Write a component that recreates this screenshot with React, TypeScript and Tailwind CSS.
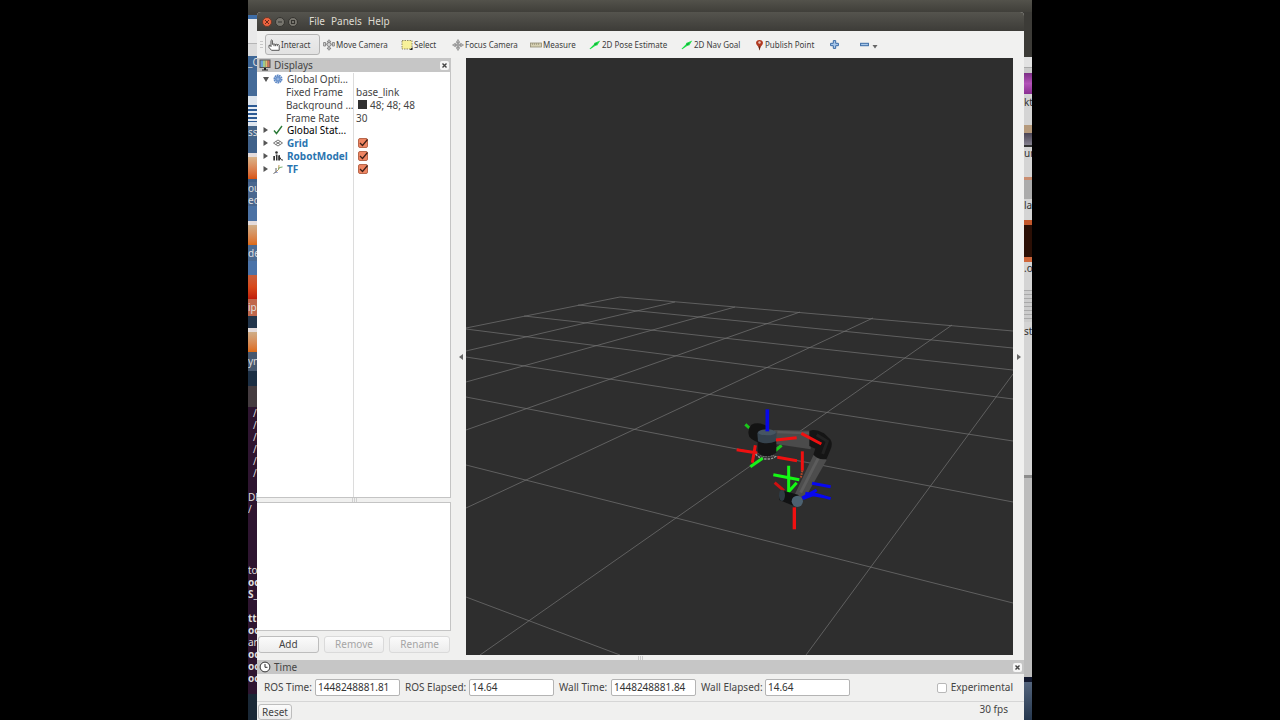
import type { ReactNode } from "react";

type Slice = { cls: string; text?: string };

// Slivers of the desktop that stay visible on both sides of the window
const leftDesktop: Slice[] = [
  { cls: "h-[3px] bg-[#3f3e3a]" },
  { cls: "h-[4px] bg-[#3f6ea8]" },
  { cls: "h-[25px] bg-[#e9e9e9] border-b border-[#b5b5b5]" },
  { cls: "h-[12px] bg-[#dcdcdc]" },
  { cls: "h-[14px] bg-[#3f6796]", text: "_C" },
  { cls: "h-[26px] bg-[#456b99]" },
  { cls: "h-[9px] bg-[#dfe6ee]" },
  { cls: "h-[17px] pl-[3px] bg-[repeating-linear-gradient(#2c5a94_0_2px,#e9eef4_2px_4px)]" },
  { cls: "h-[4px] bg-[#dfe6ee]" },
  { cls: "h-[14px] bg-[#446489]", text: "ss" },
  { cls: "h-[13px] bg-[#40618a]" },
  { cls: "h-[4px] bg-[#e4dcdc]" },
  { cls: "h-[22px] bg-linear-to-b from-[#d9b48a] to-[#d8540f]" },
  { cls: "h-[3px] bg-[#3f5f88]" },
  { cls: "h-[12px] bg-[#4a678f]", text: "ou" },
  { cls: "h-[12px] bg-[#4a678f]", text: "eo" },
  { cls: "h-[15px] bg-[#4c72a4]" },
  { cls: "h-[4px] bg-[#e4dcdc]" },
  { cls: "h-[20px] bg-linear-to-b from-[#cfae88] to-[#dd6a12]" },
  { cls: "h-[2px] bg-[#4c6b93]" },
  { cls: "h-[14px] bg-[#4c6b93]", text: "de" },
  { cls: "h-[14px] bg-[#4b73a8]" },
  { cls: "h-[24px] bg-linear-to-b from-[#c75f3a] via-[#d8481a] to-[#c01c0c]" },
  { cls: "h-[2px] bg-[#c0674c]" },
  { cls: "h-[15px] bg-[#c0674c]", text: "ip" },
  { cls: "h-[12px] bg-[#22354b]" },
  { cls: "h-[4px] bg-[#e4dcdc]" },
  { cls: "h-[20px] bg-linear-to-b from-[#cfae88] to-[#dd6a12]" },
  { cls: "h-[3px] bg-[#46586f]" },
  { cls: "h-[16px] bg-[#46586f]", text: "yn" },
  { cls: "h-[15px] bg-[#1c2f44]" },
  { cls: "h-[21px] bg-[#453c40]" },
  { cls: "h-[12px] pl-[5px]", text: "/" },
  { cls: "h-[12px] pl-[5px]", text: "/" },
  { cls: "h-[12px] pl-[5px]", text: "/" },
  { cls: "h-[12px] pl-[5px]", text: "/" },
  { cls: "h-[12px] pl-[5px]", text: "/" },
  { cls: "h-[12px] pl-[5px]", text: "/" },
  { cls: "h-[12px]" },
  { cls: "h-[12px]", text: "DE" },
  { cls: "h-[12px]", text: "/" },
  { cls: "h-[49px]" },
  { cls: "h-[12px]", text: "to" },
  { cls: "h-[12px] font-bold", text: "oc" },
  { cls: "h-[12px] font-bold", text: "S_" },
  { cls: "h-[12px]" },
  { cls: "h-[12px] font-bold", text: "tt" },
  { cls: "h-[12px] font-bold", text: "oc" },
  { cls: "h-[12px]", text: "ar" },
  { cls: "h-[12px] font-bold", text: "oc" },
  { cls: "h-[12px] font-bold", text: "oc" },
  { cls: "h-[12px] font-bold", text: "oc" },
  { cls: "h-[10px]" },
  { cls: "grow bg-[#1a2836]" },
];

const rightDesktop: Slice[] = [
  { cls: "h-[45px] bg-[#3c3b37]" },
  { cls: "h-[11px] bg-[#e2e2e2] border-b border-[#a9a9a9]" },
  { cls: "h-[5px] bg-[#c9c9c9]" },
  { cls: "h-[21px] bg-linear-to-b from-[#7d2f86] via-[#b352b8] to-[#8a2f92]" },
  { cls: "h-[2px]" },
  { cls: "h-[16px] text-[#333]", text: "kt" },
  { cls: "h-[13px]" },
  { cls: "h-[8px] bg-[#b59a7c]" },
  { cls: "h-[12px] bg-linear-to-b from-[#4a4555] to-[#85818f]" },
  { cls: "h-[2px] bg-[#333]" },
  { cls: "h-[14px] text-[#333]", text: "ur" },
  { cls: "h-[16px]" },
  { cls: "h-[3px] bg-[#c98d70]" },
  { cls: "h-[19px] bg-[#ababab]" },
  { cls: "h-[16px] text-[#333]", text: "la" },
  { cls: "h-[5px]" },
  { cls: "h-[5px] bg-[#c4582c]" },
  { cls: "h-[32px] bg-[#2b0f05]" },
  { cls: "h-[5px] bg-[#d0683c]" },
  { cls: "h-[14px] text-[#333]", text: ".o" },
  { cls: "h-[14px]" },
  { cls: "h-[32px] bg-[repeating-linear-gradient(#a9a9a9_0_1px,#cccccc_1px_4px)]" },
  { cls: "h-[3px]" },
  { cls: "h-[17px] text-[#333]", text: "st" },
  { cls: "h-[133px]" },
  { cls: "h-[3px] bg-[#8d8d8d]" },
  { cls: "h-[199px] bg-[#bcbcbc]" },
  { cls: "h-[5px] bg-[#12182e]" },
  { cls: "grow bg-linear-to-b from-[#54657d] to-[#26384f]" },
];

const gridLines = [
  [620, 297, 1013, 331],
  [578, 305, 1013, 348],
  [524, 316, 1013, 370],
  [466, 329, 1013, 399],
  [466, 357, 1013, 441],
  [466, 397, 1013, 502],
  [466, 465, 1013, 603],
  [466, 597, 620, 655],
  [620, 297, 466, 328],
  [675, 302, 466, 351],
  [735, 307, 466, 382],
  [800, 312, 466, 430],
  [873, 318, 466, 508],
  [952, 325, 480, 655],
  [1013, 374, 806, 655],
];

function Strip({ slices, className }: { slices: Slice[]; className: string }) {
  return (
    <div aria-hidden="true" className={"flex shrink-0 flex-col overflow-hidden text-[10px] leading-[12px] " + className}>
      {slices.map((s, i) => (
        <div key={i} className={"shrink-0 overflow-hidden whitespace-nowrap " + s.cls}>
          {s.text}
        </div>
      ))}
    </div>
  );
}

function HandIcon() {
  return (
    <svg viewBox="0 0 12 12" className="h-3 w-3 shrink-0" fill="#fff" stroke="#444" strokeWidth="0.9" strokeLinejoin="round">
      <path d="M3 7.600V1.500Q3.700.4 4.400 1.500V5.400Q5.200 4.500 6 5.400 6.800 4.700 7.600 5.500 8.500 4.900 9.300 5.700 10.600 5 11.200 6.300V11.300H3.500L1 8.500V6.300Q1.800 5.500 3 7.600Z" />
      <path d="M6 5.400V7.200M7.600 5.500V7.200M9.300 5.700V7.200" fill="none" />
    </svg>
  );
}

function MoveIcon() {
  return (
    <svg viewBox="0 0 12 12" className="h-3 w-3 shrink-0" fill="#d5d5d5" stroke="#777" strokeWidth="0.8">
      <path d="M6 .7 8 3H4ZM6 11.300 4 9H8ZM.6 3.500H2.600V7H.6ZM9.400 3.500H11.400V7H9.400Z" />
      <path d="M2.600 5.200H9.400M6 3V9" />
      <circle cx="6" cy="5.500" r="2" />
    </svg>
  );
}

function SelectIcon() {
  return (
    <svg viewBox="0 0 12 12" className="h-3 w-3 shrink-0">
      <rect x="1" y="1.500" width="10" height="8.500" fill="#f8f19a" stroke="#77704a" strokeDasharray="1.500 1" strokeWidth="0.800" />
      <path d="M11.500 8V11H8.500Z" fill="#222" />
    </svg>
  );
}

function FocusIcon() {
  return (
    <svg viewBox="0 0 12 12" className="h-3 w-3 shrink-0" fill="#bbb" stroke="#888" strokeWidth="0.700">
      <circle cx="6" cy="6" r="2.800" fill="none" />
      <path d="M6 .5 7.500 3 6.500 3.300V5.500H8.700L9 4.500 11.500 6 9 7.500 8.700 6.500H6.500V8.700L7.500 9 6 11.500 4.500 9 5.500 8.700V6.500H3.300L3 7.500.5 6 3 4.500 3.300 5.500H5.500V3.300L4.500 3Z" />
    </svg>
  );
}

function RulerIcon() {
  return (
    <svg viewBox="0 0 12 12" className="h-3 w-3 shrink-0">
      <rect x="0.500" y="4" width="11" height="4" fill="#d6d0b2" stroke="#928c74" strokeWidth="0.800" />
      <path d="M2.500 4V6M4.500 4V6M6.500 4V6M8.500 4V6" stroke="#928c74" strokeWidth="0.600" />
    </svg>
  );
}

function ArrowIcon() {
  return (
    <svg viewBox="0 0 12 12" className="h-3 w-3 shrink-0">
      <path d="M.5 9.800 5 5.200 5.200 3.900 11.300 1.400 8.200 6.500 6.800 6.500 1.300 10.300Z" fill="#1fe04a" />
      <path d="M5 5.200 8.500 3.500 6.800 6.500Z" fill="#12a13a" />
    </svg>
  );
}

function PinIcon() {
  return (
    <svg viewBox="0 0 9 12" className="h-3 w-[9px] shrink-0">
      <path d="M4.500 11.500 3.500 8Q1 5.500 1 3.900 1.200.9 4.500.9 7.800.9 8 3.900 8 5.500 5.500 8Z" fill="#b23a22" />
      <path d="M3.500 7.500H5.500L4.500 11.500Z" fill="#5c2413" />
      <circle cx="4.500" cy="3.500" r="1.200" fill="#e8c4b8" />
    </svg>
  );
}

function MonitorIcon() {
  return (
    <svg viewBox="0 0 12 12" className="h-3 w-3">
      <rect x="0.500" y="0.500" width="11" height="8.500" fill="#555" />
      <path d="M1.500 1.500H4V8H1.500Z" fill="#6b9fd6" />
      <path d="M4 1.500H6.500V8H4Z" fill="#9cc98c" />
      <path d="M6.500 1.500H8.500V8H6.500Z" fill="#e0bd6c" />
      <path d="M8.500 1.500H10.500V8H8.500Z" fill="#d0705f" />
      <path d="M5 9H7V10.500H9V11.500H3V10.500H5Z" fill="#222" />
    </svg>
  );
}

function ClockIcon() {
  return (
    <svg viewBox="0 0 12 12" className="h-3 w-3" fill="none" stroke="#333">
      <circle cx="6" cy="6" r="4.900" fill="#fff" />
      <path d="M6 3V6.300H8.500" />
    </svg>
  );
}

const rowIcons: Record<string, ReactNode> = {
  gear: (
    <g fill="none" stroke="#5b86c4">
      <circle cx="5" cy="5" r="3.600" strokeWidth="1.800" strokeDasharray="1.700 0.500" />
      <circle cx="5" cy="5" r="2.400" fill="#7ba2d8" />
      <circle cx="5" cy="5" r="0.600" fill="#dfe9f6" stroke="none" />
    </g>
  ),
  check: <path d="M1 5.500 3.500 8.500 9 1" fill="none" stroke="#2c7a38" strokeWidth="1.400" />,
  grid: <path d="M5 2 9.500 5 5 8 .5 5ZM2.800 3.500 7.200 6.500M7.200 3.500 2.800 6.500" fill="none" stroke="#555" strokeWidth="0.800" />,
  robot: (
    <g fill="#333">
      <circle cx="3.500" cy="1.500" r="1.300" />
      <path d="M.3 5H2V9.500H.3ZM2.700 3.500H4.500V9.500H3V6ZM5.200 4.500 7 4V9.500H5.200Z" />
      <path d="M6.500 6 8.500 9H10" fill="none" stroke="#333" />
    </g>
  ),
  axes: (
    <g fill="none" strokeWidth="0.900">
      <path d="M3 4V8L.5 9.500" stroke="#555" />
      <path d="M3 8 5.500 5.500 6 1" stroke="#b8924a" />
      <path d="M5.500 5.500 6.500 3.500 9.500 3" stroke="#5da05a" />
      <path d="M3 8 4.500 8.500" stroke="#4a5dc0" />
    </g>
  ),
};

type Row = { name: string; icon?: string; arrow?: "open" | "closed"; value?: ReactNode; tone?: string; checked?: boolean };

const rows: Row[] = [
  { name: "Global Opti...", icon: "gear", arrow: "open" },
  { name: "Fixed Frame", value: "base_link" },
  {
    name: "Background ...",
    value: (
      <span className="flex items-center gap-[3px]">
        <span className="ml-[2px] h-[9px] w-[9px] bg-[#303030]" />
        48; 48; 48
      </span>
    ),
  },
  { name: "Frame Rate", value: "30" },
  { name: "Global Stat...", icon: "check", arrow: "closed", tone: "text-black" },
  { name: "Grid", icon: "grid", arrow: "closed", tone: "font-bold text-[#2a74b0]", checked: true },
  { name: "RobotModel", icon: "robot", arrow: "closed", tone: "font-bold text-[#2a74b0]", checked: true },
  { name: "TF", icon: "axes", arrow: "closed", tone: "font-bold text-[#2a74b0]", checked: true },
];

function DisplayTree() {
  return (
    <table className="mt-px h-[102px] w-full table-fixed border-separate border-spacing-0 leading-[12px]">
      <tbody>
        {rows.map((row) => (
          <tr key={row.name}>
            <td className="w-[97px] overflow-hidden border-r border-[#dcdcdc] p-0">
              <div className="flex items-center whitespace-nowrap">
                {row.icon ? (
                  <>
                    <svg viewBox="0 0 6 6" className="ml-[6px] h-[6px] w-[6px] shrink-0" fill="#555">
                      <path d={row.arrow === "open" ? "M0 1H6L3 6Z" : "M.5 0 5 3 .5 6Z"} />
                    </svg>
                    <svg viewBox="0 0 10 10" className="mx-[4px] h-[10px] w-[10px] shrink-0">
                      {rowIcons[row.icon]}
                    </svg>
                  </>
                ) : (
                  <span className="w-[29px] shrink-0" />
                )}
                <span className={row.tone}>{row.name}</span>
              </div>
            </td>
            <td className="py-0 pr-0 pl-[2px]">
              {row.checked ? (
                <span className="ml-[2px] grid h-[10px] w-[10px]">
                  <input
                    type="checkbox"
                    defaultChecked
                    aria-label={row.name}
                    className="col-start-1 row-start-1 h-[10px] w-[10px] appearance-none rounded-[2px] border border-[#b9684c] bg-[#ee8562]"
                  />
                  <svg viewBox="0 0 10 10" className="pointer-events-none col-start-1 row-start-1 h-[10px] w-[10px]">
                    <path d="M2 5 4.500 7.500 9.500 1.500" fill="none" stroke="#3c2018" strokeWidth="1.200" />
                  </svg>
                </span>
              ) : (
                row.value
              )}
            </td>
          </tr>
        ))}
      </tbody>
    </table>
  );
}

function PanelHeader({ title, icon, className }: { title: string; icon: ReactNode; className: string }) {
  return (
    <div className={"flex h-[14px] shrink-0 items-center gap-[3px] bg-[#c6c6c6] pl-[2px] " + className}>
      {icon}
      <h2 className="grow leading-[14px]">{title}</h2>
      <button aria-label={"Close " + title} className="grid h-[9px] w-[9px] place-items-center rounded-[2px] bg-[#f6f6f6]">
        <svg viewBox="0 0 5 5" className="h-[5px] w-[5px]" stroke="#444" strokeWidth="1.400">
          <path d="M.5.5 4.500 4.500M4.500.5.5 4.500" />
        </svg>
      </button>
    </div>
  );
}

function ToolButton({ label, icon, className }: { label: string; icon: ReactNode; className: string }) {
  return (
    <button className={"flex h-[21px] shrink-0 items-center gap-px whitespace-nowrap " + className}>
      {icon}
      {label}
    </button>
  );
}

function Toolbar() {
  return (
    <div className="flex h-[27px] shrink-0 items-center bg-[#f1f1f0] pl-[3px] text-[8px] text-[#3c3c3c]">
      <span className="mr-[2px] h-[8px] w-[3px] bg-[repeating-linear-gradient(#c8c8c8_0_1px,#f1f1f0_1px_3px)]" />
      <ToolButton
        label="Interact"
        icon={<HandIcon />}
        className="mr-[3px] w-[55px] rounded-[3px] border border-[#b4b4b4] bg-linear-to-b from-[#ececec] to-[#e2e2e2] pl-[2px]"
      />
      <ToolButton label="Move Camera" icon={<MoveIcon />} className="w-[78px]" />
      <ToolButton label="Select" icon={<SelectIcon />} className="w-[51px]" />
      <ToolButton label="Focus Camera" icon={<FocusIcon />} className="w-[78px]" />
      <ToolButton label="Measure" icon={<RulerIcon />} className="w-[59px]" />
      <ToolButton label="2D Pose Estimate" icon={<ArrowIcon />} className="w-[92px]" />
      <ToolButton label="2D Nav Goal" icon={<ArrowIcon />} className="w-[74px]" />
      <ToolButton label="Publish Point" icon={<PinIcon />} className="w-[75px] gap-[3px]" />
      <button aria-label="Add tool" className="w-[30px] shrink-0">
        <svg viewBox="0 0 9 9" className="h-[9px] w-[9px]">
          <path d="M3.300.6H5.700V3.300H8.400V5.700H5.700V8.400H3.300V5.700H.6V3.300H3.300Z" fill="#a9c8ea" stroke="#3a6ba5" />
        </svg>
      </button>
      <button aria-label="Remove tool" className="flex shrink-0 items-center gap-[3px]">
        <svg viewBox="0 0 9 9" className="h-[9px] w-[9px]">
          <rect x="0.600" y="3.300" width="7.800" height="2.400" fill="#a9c8ea" stroke="#3a6ba5" />
        </svg>
        <svg viewBox="0 0 6 9" className="h-[9px] w-[6px]" fill="#666">
          <path d="M.5 5H5.500L3 8.500Z" />
        </svg>
      </button>
    </div>
  );
}

function RobotArm() {
  return (
    <g transform="translate(700 380) scale(0.3333)" fill="none">
      <path d="M136 133 148 144M245 196 226 212" stroke="#19c819" strokeWidth="9" />
      <path d="M110 209 172 219M166 196 157 248" stroke="#ee1010" strokeWidth="9" />
      <path d="M154 134Q174 124 200 138L190 190Q160 186 148 170Q140 150 154 134Z" fill="#131313" />
      <path d="M222 150 336 152 332 208 226 192Z" fill="#4b4b4b" />
      <path d="M232 156 328 160" stroke="#595959" strokeWidth="7" />
      <path d="M173 178V218Q200 240 229 218V178Z" fill="#141415" />
      <path d="M172 158Q200 142 230 158L228 184Q200 196 174 184Z" fill="#35424d" />
      <ellipse cx="201" cy="157" rx="27" ry="9" fill="#465562" />
      <path d="M167 222Q180 238 202 237 222 237 230 226" stroke="#999" strokeWidth="4" strokeDasharray="7 3" />
      <path d="M180 227Q200 234 222 226" stroke="#777" strokeWidth="3" strokeDasharray="5 3" />
      <path d="M151 260 188 235" stroke="#19f019" strokeWidth="9" />
      <path d="M342 222 380 240 314 356 284 344Z" fill="#4d4d4d" />
      <path d="M356 232 302 338" stroke="#5c5c5c" strokeWidth="9" />
      <path d="M328 152Q346 145 372 160L391 178Q400 193 391 210L380 236Q358 242 340 224L346 206 328 198Z" fill="#151515" />
      <path d="M350 164 382 184 368 222" stroke="#222" strokeWidth="9" />
      <path d="M228 180 290 173M304 160 364 192M232 232 291 242" stroke="#f01010" strokeWidth="9" />
      <path d="M307 214V272" stroke="#f01010" strokeWidth="9" />
      <path d="M307 272 302 296" stroke="#b84828" strokeWidth="6" strokeDasharray="5 3" />
      <path d="M202 88V154" stroke="#0808e8" strokeWidth="11" />
      <path d="M266 257V334M220 284 298 299M263 338 290 308" stroke="#14f814" strokeWidth="9" />
      <path d="M224 308 252 332" stroke="#d01010" strokeWidth="9" />
      <path d="M243 330 294 344 306 366 282 378 238 360Z" fill="#111213" />
      <ellipse cx="246" cy="346" rx="9" ry="17" fill="#2f3b44" />
      <path d="M336 310 392 320M306 354 350 330M308 356 344 342 392 356M316 340 372 350" stroke="#0808f0" strokeWidth="9" />
      <circle cx="292" cy="364" r="17" fill="#4c6170" />
      <path d="M283 382V448" stroke="#f01010" strokeWidth="10" />
    </g>
  );
}

function Viewport() {
  return (
    <svg
      role="img"
      aria-label="Robot arm on a ground grid"
      viewBox="466 58 547 597"
      preserveAspectRatio="xMidYMax slice"
      className="min-w-0 flex-1 bg-[#2e2e2e]"
    >
      <g stroke="#757575" strokeWidth="0.700">
        {gridLines.map(([x1, y1, x2, y2], i) => (
          <line key={i} x1={x1} y1={y1} x2={x2} y2={y2} />
        ))}
      </g>
      <RobotArm />
    </svg>
  );
}

function TimeField({ id, label, value, className }: { id: string; label: string; value: string; className: string }) {
  return (
    <>
      <label htmlFor={id} className={"shrink-0 whitespace-nowrap " + className}>
        {label}
      </label>
      <input
        id={id}
        type="text"
        defaultValue={value}
        className="h-[17px] w-[85px] shrink-0 rounded-[2px] border border-[#b4b4b4] bg-white px-[2px] pb-px text-[#333]"
      />
    </>
  );
}

const dockButton =
  "h-[17px] flex-1 rounded-[3px] border border-[#bdbdbd] bg-linear-to-b from-[#fbfbfb] to-[#ececec] leading-[15px] disabled:border-[#dadada] disabled:text-[#a5a5a5]";

export default function App() {
  return (
    <div className="flex min-h-screen bg-black font-['Noto_Sans',sans-serif] text-[10px] text-[#444]">
      <div className="w-[248px] shrink-0" />
      <div className="flex min-w-0 flex-1 flex-col overflow-hidden bg-[#3c3b37]">
        <div className="h-[12px] shrink-0 bg-linear-to-b from-[#53524b] to-[#403f3a]" />
        <div className="flex flex-1">
          <Strip slices={leftDesktop} className="w-[9px] bg-[#2e1530] text-[#ddd]" />

          <main className="flex min-w-0 flex-1 flex-col overflow-hidden rounded-t-[4px] bg-[#f0f0ef]">
            <header className="flex h-[19px] shrink-0 items-center bg-linear-to-b from-[#55544e] to-[#3d3c38] pl-[5px] text-[#dfdbd2]">
              <div className="flex gap-[3px]">
                <button aria-label="Close" className="grid h-[10px] w-[10px] place-items-center rounded-full border border-[#6a3a2a] bg-[#ee6440]">
                  <svg viewBox="0 0 6 6" className="h-[6px] w-[6px]" stroke="#6a2a1a">
                    <path d="M1 1 5 5M5 1 1 5" />
                  </svg>
                </button>
                <button aria-label="Minimize" className="grid h-[10px] w-[10px] place-items-center rounded-full border border-[#353430] bg-[#77756e]">
                  <svg viewBox="0 0 6 6" className="h-[6px] w-[6px]" stroke="#353430">
                    <path d="M1 3H5" />
                  </svg>
                </button>
                <button aria-label="Maximize" className="grid h-[10px] w-[10px] place-items-center rounded-full border border-[#353430] bg-[#77756e]">
                  <svg viewBox="0 0 6 6" className="h-[6px] w-[6px]" fill="none" stroke="#353430">
                    <rect x="1.500" y="1.500" width="3" height="3" />
                  </svg>
                </button>
              </div>
              <nav className="ml-[11px] flex gap-[6px]">
                <button>File</button>
                <button>Panels</button>
                <button>Help</button>
              </nav>
            </header>

            <Toolbar />

            <div className="flex flex-1">
              <section className="flex w-[194px] shrink-0 flex-col">
                <PanelHeader title="Displays" icon={<MonitorIcon />} className="pr-[2px]" />
                <div className="flex grow flex-col border-r border-b border-[#c4c4c4] bg-white">
                  <DisplayTree />
                  <div className="w-[97px] grow border-r border-[#dcdcdc]" />
                </div>
                <div className="flex h-[4px] shrink-0 justify-center">
                  <span className="w-[5px] bg-[repeating-linear-gradient(90deg,#d0d0d0_0_1px,#f0f0ef_1px_2px)]" />
                </div>
                <div className="h-[129px] shrink-0 border border-l-0 border-[#c4c4c4] bg-white" />
                <div className="flex h-[24px] shrink-0 items-center gap-[5px] px-px pt-[2px]">
                  <button className={dockButton}>Add</button>
                  <button disabled className={dockButton}>Remove</button>
                  <button disabled className={dockButton}>Rename</button>
                </div>
              </section>
              <button aria-label="Hide left panel" className="flex w-[15px] shrink-0 items-center justify-end pr-[3px]">
                <svg viewBox="0 0 4 6" className="h-[6px] w-[4px]" fill="#666">
                  <path d="M4 0V6L0 3Z" />
                </svg>
              </button>
              <Viewport />
              <button aria-label="Hide right panel" className="flex w-[11px] shrink-0 items-center justify-center">
                <svg viewBox="0 0 4 6" className="h-[6px] w-[4px]" fill="#666">
                  <path d="M0 0V6L4 3Z" />
                </svg>
              </button>
            </div>

            <div className="flex h-[5px] shrink-0 items-center justify-center">
              <span className="h-[4px] w-[6px] bg-[repeating-linear-gradient(90deg,#cccccc_0_1px,#f0f0ef_1px_2px)]" />
            </div>

            <section className="shrink-0">
              <PanelHeader title="Time" icon={<ClockIcon />} className="pr-[2px]" />
              <div className="flex h-[28px] items-center gap-[5px] border-b border-[#d6d6d6] pr-[11px] pl-[7px]">
                <TimeField id="ros-time" label="ROS Time:" value="1448248881.81" className="w-[46px]" />
                <TimeField id="ros-elapsed" label="ROS Elapsed:" value="14.64" className="w-[59px]" />
                <TimeField id="wall-time" label="Wall Time:" value="1448248881.84" className="w-[47px]" />
                <TimeField id="wall-elapsed" label="Wall Elapsed:" value="14.64" className="w-[59px]" />
                <label className="ml-auto flex items-center gap-[4px]">
                  <input type="checkbox" className="h-[10px] w-[10px] appearance-none rounded-[2px] border border-[#b8b8b8] bg-white" />
                  Experimental
                </label>
              </div>
            </section>

            <footer className="flex h-[18px] shrink-0 items-start justify-between pr-[16px] pl-px">
              <button className="mt-[2px] h-[16px] w-[34px] rounded-[3px] border border-[#bdbdbd] bg-linear-to-b from-[#fbfbfb] to-[#ececec] leading-[13px]">
                Reset
              </button>
              <span>30 fps</span>
            </footer>
          </main>

          <Strip slices={rightDesktop} className="w-[8px] bg-[#d4d4d4]" />
        </div>
      </div>
      <div className="w-[248px] shrink-0" />
    </div>
  );
}
